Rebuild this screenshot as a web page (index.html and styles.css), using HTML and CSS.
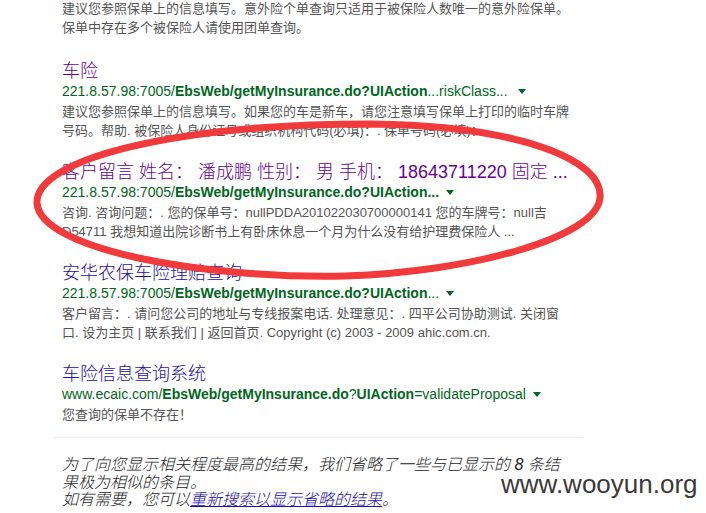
FILE: index.html
```
<!DOCTYPE html>
<html lang="zh-CN">
<head>
<meta charset="utf-8">
<title>搜索结果</title>
<link rel="stylesheet" href="styles.css">
</head>
<body>
<div class="page">
  <div class="serp">
    <div class="snippet lead">建议您参照保单上的信息填写。意外险个单查询只适用于被保险人数唯一的意外险保单。<br>保单中存在多个被保险人请使用团单查询。</div>

    <div class="result">
      <h3 class="title"><a class="visited" href="#">车险</a></h3>
      <div class="url">221.8.57.98:7005/<b>EbsWeb/getMyInsurance.do?UIAction</b>...riskClass...&nbsp;<span class="caret"></span></div>
      <div class="snippet">建议您参照保单上的信息填写。如果您的车是新车，请您注意填写保单上打印的临时车牌<br>号码。帮助. 被保险人身份证号或组织机构代码(必填)：. 保单号码(必填)：.</div>
    </div>

    <div class="result">
      <h3 class="title"><a class="visited" href="#">客户留言 姓名： 潘成鹏 性别： 男 手机： 18643711220 固定 ...</a></h3>
      <div class="url">221.8.57.98:7005/<b>EbsWeb/getMyInsurance.do?UIAction...</b><span class="caret"></span></div>
      <div class="snippet">咨询. 咨询问题：. 您的保单号：nullPDDA201022030700000141 您的车牌号：null吉<br>D54711 我想知道出院诊断书上有卧床休息一个月为什么没有给护理费保险人 ...</div>
    </div>

    <div class="result">
      <h3 class="title"><a href="#">安华农保车险理赔查询</a></h3>
      <div class="url">221.8.57.98:7005/<b>EbsWeb/getMyInsurance.do?UIAction</b>...<span class="caret"></span></div>
      <div class="snippet">客户留言：. 请问您公司的地址与专线报案电话. 处理意见：. 四平公司协助测试. 关闭窗<br>口. 设为主页 | 联系我们 | 返回首页. Copyright (c) 2003 - 2009 ahic.com.cn.</div>
    </div>

    <div class="result">
      <h3 class="title"><a href="#">车险信息查询系统</a></h3>
      <div class="url">www.ecaic.com/<b>EbsWeb/getMyInsurance.do</b>?<b>UIAction</b>=validateProposal<span class="caret"></span></div>
      <div class="snippet">您查询的保单不存在！</div>
    </div>
  </div>

  <hr class="rule">

  <p class="omitted">为了向您显示相关程度最高的结果，我们省略了一些与已显示的 8 条结<br>果极为相似的条目。<br>如有需要，您可以<a href="#">重新搜索以显示省略的结果</a>。</p>

  <svg class="mark" width="706" height="513" viewBox="0 0 706 513" aria-hidden="true">
    <path d="M372 124 C 520 126, 604 160, 600 198 C 596 238, 470 272, 345 276 C 205 279, 40 250, 37 203 C 35 160, 170 124, 372 124 Z" fill="none" stroke="#f23a3a" stroke-width="7"/>
  </svg>

  <div class="watermark">www.wooyun.org</div>
</div>
</body>
</html>
```
FILE: styles.css
```
html, body {
  margin: 0;
  padding: 0;
  background: #fff;
}

body {
  font-family: "Liberation Sans", Arial, "Noto Sans CJK SC", sans-serif;
  color: #545454;
}

.page {
  position: relative;
  width: 706px;
  height: 513px;
  overflow: hidden;
  padding-left: 54px;
  box-sizing: border-box;
}

.serp {
  width: 528px;
  padding-left: 8px;
  box-sizing: border-box;
  margin-top: -1px;
}

.snippet {
  font-size: 13px;
  line-height: 19px;
  color: #545454;
  white-space: nowrap;
}

.lead {
  margin-bottom: 24px;
}

.result {
  margin-bottom: 22px;
}

.result:last-child {
  margin-bottom: 0;
}

.title {
  margin: 0;
  font-size: 18px;
  font-weight: 300;
  line-height: 21px;
  white-space: nowrap;
}

.title a {
  color: #1a0dab;
  text-decoration: none;
}

.title a.visited {
  color: #660099;
}

.url {
  font-size: 14px;
  line-height: 18px;
  margin-bottom: 2px;
  color: #006621;
  white-space: nowrap;
}

.url b {
  font-weight: bold;
}

.caret {
  display: inline-block;
  width: 0;
  height: 0;
  margin-left: 7px;
  border-top: 5px solid #006621;
  border-left: 4px solid transparent;
  border-right: 4px solid transparent;
  vertical-align: 2px;
}

.rule {
  width: 528px;
  margin: 13px 0 0 0;
  border: 0;
  border-top: 1px solid #ebebeb;
  height: 0;
}

.omitted {
  margin: 18px 0 0 8px;
  font-size: 16px;
  font-weight: 300;
  line-height: 17.5px;
  font-style: italic;
  color: #222;
  white-space: nowrap;
}

.omitted a {
  color: #1a0dab;
  text-decoration: underline;
}

.mark {
  position: absolute;
  left: 0;
  top: 0;
  pointer-events: none;
}

.watermark {
  position: absolute;
  left: 501px;
  top: 469px;
  font-family: "Liberation Sans", Arial, sans-serif;
  font-size: 26px;
  line-height: 30px;
  color: #3a3a3a;
}
```
